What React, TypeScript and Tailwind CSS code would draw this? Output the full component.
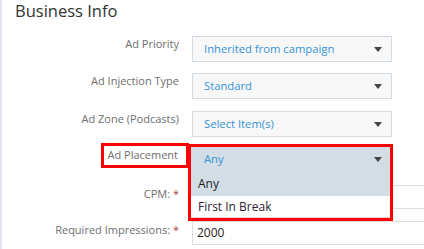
import React from "react";

const font = { fontFamily: '"Open Sans", "Noto Sans", sans-serif' };

function Caret() {
  return (
    <svg width="8" height="5" viewBox="0 0 8 5" className="shrink-0">
      <path d="M0 0 H8 L4 5 Z" fill="#444" />
    </svg>
  );
}

function Label({ children, required }: { children: React.ReactNode; required?: boolean }) {
  return (
    <div className="w-[165px] shrink-0 text-right text-[11px] leading-[16px] text-[#6e6e6e]">
      {children}
      {required && <span className="text-[#a94442]"> *</span>}
    </div>
  );
}

function Select({ value }: { value: string }) {
  return (
    <div className="w-[200px] h-[26px] bg-[#f8f8f8] border border-[#d3dce4] flex items-center justify-between pl-[11px] pr-[9px]">
      <span className="text-[11.25px] text-[#3393d6]">{value}</span>
      <Caret />
    </div>
  );
}

export default function App() {
  return (
    <div style={font} className="w-[424px] h-[249px] overflow-hidden bg-white border-l-2 border-[#e6e4ee]">
      <h2 className="pl-[13px] text-[16.5px] leading-[22px] text-[#333]">Business Info</h2>

      <div className="flex flex-col mt-[14px] pl-[12px]">
        <div className="flex items-start gap-[13px] h-[26px] mb-[11px]">
          <Label>Ad Priority</Label>
          <Select value="Inherited from campaign" />
        </div>
        <div className="flex items-start gap-[13px] h-[26px] mb-[12px]">
          <Label>Ad Injection Type</Label>
          <Select value="Standard" />
        </div>
        <div className="flex items-start gap-[13px] h-[26px] mb-[11px]">
          <Label>Ad Zone (Podcasts)</Label>
          <Select value="Select Item(s)" />
        </div>

        <div className="flex items-start gap-[13px] h-[26px] mb-[11px] relative z-10">
          <div className="w-[165px] shrink-0 flex justify-end">
            <div className="border-[3px] border-[#ff0000] h-[25px] pl-[3px] pr-[8px] flex items-center text-[11px] text-[#6e6e6e] -mr-[10px] mt-[-5px]">
              Ad Placement
            </div>
          </div>
          <div className="relative w-[198px] h-[26px]">
            <div className="absolute left-[-4px] top-[-4px] w-[205px] border-[3px] border-[#ff0000] bg-white">
              <div className="h-[25px] bg-[#d3dde6] flex items-center justify-between pl-[13px] pr-[8px]">
                <span className="text-[11.25px] text-[#3393d6]">Any</span>
                <Caret />
              </div>
              <div className="h-[24px] bg-[#d3dde6] flex items-center pl-[7px] text-[12px] text-[#222]">Any</div>
              <div className="h-[22px] flex items-center pl-[7px] text-[12px] text-[#2a2233] border-b border-[#d8d8d8]">
                First In Break
              </div>
            </div>
          </div>
        </div>

        <div className="flex items-start gap-[13px] h-[24px] mb-[12px]">
          <div className="pt-[1px]">
            <Label required>CPM:</Label>
          </div>
          <div className="flex-1 h-[24px] border border-r-0 border-[#dddddd] mr-[-40px]" />
        </div>
        <div className="flex items-start gap-[13px] h-[24px]">
          <div className="pt-[1px]">
            <Label required>Required Impressions:</Label>
          </div>
          <div className="flex-1 h-[24px] border border-r-0 border-[#dddddd] mr-[-40px] flex items-center pl-[4px] text-[12px] text-[#222]">
            2000
          </div>
        </div>
      </div>
    </div>
  );
}
